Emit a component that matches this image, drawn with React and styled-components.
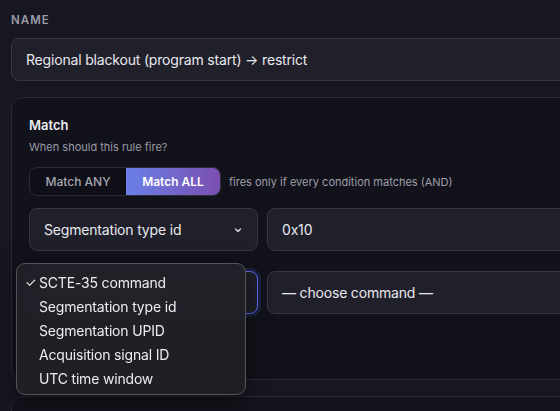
import React from "react";
import styled, { createGlobalStyle } from "styled-components";

const Global = createGlobalStyle`
  html, body { margin: 0; padding: 0; background: #171722; overflow: hidden; }
  body { font-family: Inter, "Noto Sans", "Liberation Sans", sans-serif; color: #e6e6ec; }
  * { box-sizing: border-box; }
`;

const Page = styled.div`
  width: 640px;
  padding: 13px 0 0 11px;
  display: flex;
  flex-direction: column;
`;

const Label = styled.div`
  font-size: 11.5px;
  font-weight: 600;
  letter-spacing: 0.09em;
  color: #9a9aa6;
  text-transform: uppercase;
  line-height: 14px;
  margin-bottom: 11px;
`;

const Field = styled.div`
  height: 43px;
  display: flex;
  align-items: center;
  padding: 0 14px;
  background: #20202a;
  border: 1px solid #373743;
  border-radius: 8px;
  font-size: 14px;
  letter-spacing: -0.18px;
  color: #e8e8ee;
  flex: ${(p) => (p.$grow ? 1 : "none")};
  width: ${(p) => (p.$w ? p.$w + "px" : "auto")};
  justify-content: space-between;
  ${(p) =>
    p.$focus &&
    `border: 1.5px solid #5b6cf0; box-shadow: 0 0 0 3px rgba(80,100,230,0.18);`}
`;

const Card = styled.div`
  margin-top: 16px;
  border: 1px solid #2a2a35;
  border-radius: 12px;
  background: #12121b;
  padding: 19px 17px 0 17px;
  height: 283px;
  display: flex;
  flex-direction: column;
  position: relative;
`;

const Title = styled.div`
  font-size: 13px;
  font-weight: 600;
  color: #ececf2;
  line-height: 16px;
`;

const Sub = styled.div`
  font-size: 11px;
  color: #9a9aa6;
  margin-top: 7px;
  line-height: 14px;
`;

const ToggleRow = styled.div`
  display: flex;
  align-items: center;
  gap: 8px;
  margin-top: 13px;
`;

const Toggle = styled.div`
  display: flex;
  height: 29px;
  border: 1px solid #2d2d39;
  border-radius: 8px;
  background: #0f0f17;
  overflow: hidden;
`;

const Seg = styled.div`
  display: flex;
  align-items: center;
  justify-content: center;
  width: ${(p) => p.$w}px;
  font-size: 12px;
  font-weight: ${(p) => (p.$active ? 600 : 500)};
  color: ${(p) => (p.$active ? "#ffffff" : "#a6a6b2")};
  background: ${(p) =>
    p.$active ? "linear-gradient(90deg, #6a80e8 0%, #7a4fb0 100%)" : "transparent"};
`;

const Hint = styled.div`
  font-size: 11px;
  color: #9e9eaa;
`;

const Row = styled.div`
  display: flex;
  gap: 9px;
  margin-top: ${(p) => p.$mt}px;
  position: relative;
`;

const Chevron = () => (
  <svg width="10" height="10" viewBox="0 0 10 10">
    <path d="M2.5 4 L5 6.5 L7.5 4" fill="none" stroke="#d8d8e0" strokeWidth="1.4" strokeLinecap="round" strokeLinejoin="round" />
  </svg>
);

const Popup = styled.div`
  position: absolute;
  left: -13px;
  top: -8px;
  width: 230px;
  padding: 6px 0 4px 0;
  background: rgba(33, 33, 39, 0.92);
  backdrop-filter: blur(10px);
  border: 1px solid #54545c;
  border-radius: 9px;
  box-shadow: 0 8px 24px rgba(0, 0, 0, 0.5);
  display: flex;
  flex-direction: column;
  z-index: 5;
`;

const Item = styled.div`
  height: 24px;
  display: flex;
  align-items: center;
  font-size: 14px;
  letter-spacing: -0.18px;
  color: #ececf0;
  padding-left: 22px;
  position: relative;
`;

const Check = styled.span`
  position: absolute;
  left: 8px;
  font-size: 13px;
`;

const Bottom = styled.div`
  margin-top: 16px;
  height: 60px;
  border: 1px solid #2a2a35;
  border-radius: 12px;
  background: #14141d;
`;

const items = [
  "SCTE-35 command",
  "Segmentation type id",
  "Segmentation UPID",
  "Acquisition signal ID",
  "UTC time window",
];

export default function App() {
  return (
    <>
      <Global />
      <Page>
        <Label>Name</Label>
        <Field>Regional blackout (program start) → restrict</Field>
        <Card>
          <Title>Match</Title>
          <Sub>When should this rule fire?</Sub>
          <ToggleRow>
            <Toggle>
              <Seg $w={96}>Match ANY</Seg>
              <Seg $w={94} $active>Match ALL</Seg>
            </Toggle>
            <Hint>fires only if every condition matches (AND)</Hint>
          </ToggleRow>
          <Row $mt={12}>
            <Field $w={229}>
              Segmentation type id
              <Chevron />
            </Field>
            <Field $grow>0x10</Field>
          </Row>
          <Row $mt={20}>
            <Field $w={229} $focus>
              SCTE-35 command
              <Chevron />
            </Field>
            <Field $grow>— choose command —</Field>
            <Popup>
              {items.map((t, i) => (
                <Item key={t}>
                  {i === 0 && <Check>✓</Check>}
                  {t}
                </Item>
              ))}
            </Popup>
          </Row>
        </Card>
        <Bottom />
      </Page>
    </>
  );
}
